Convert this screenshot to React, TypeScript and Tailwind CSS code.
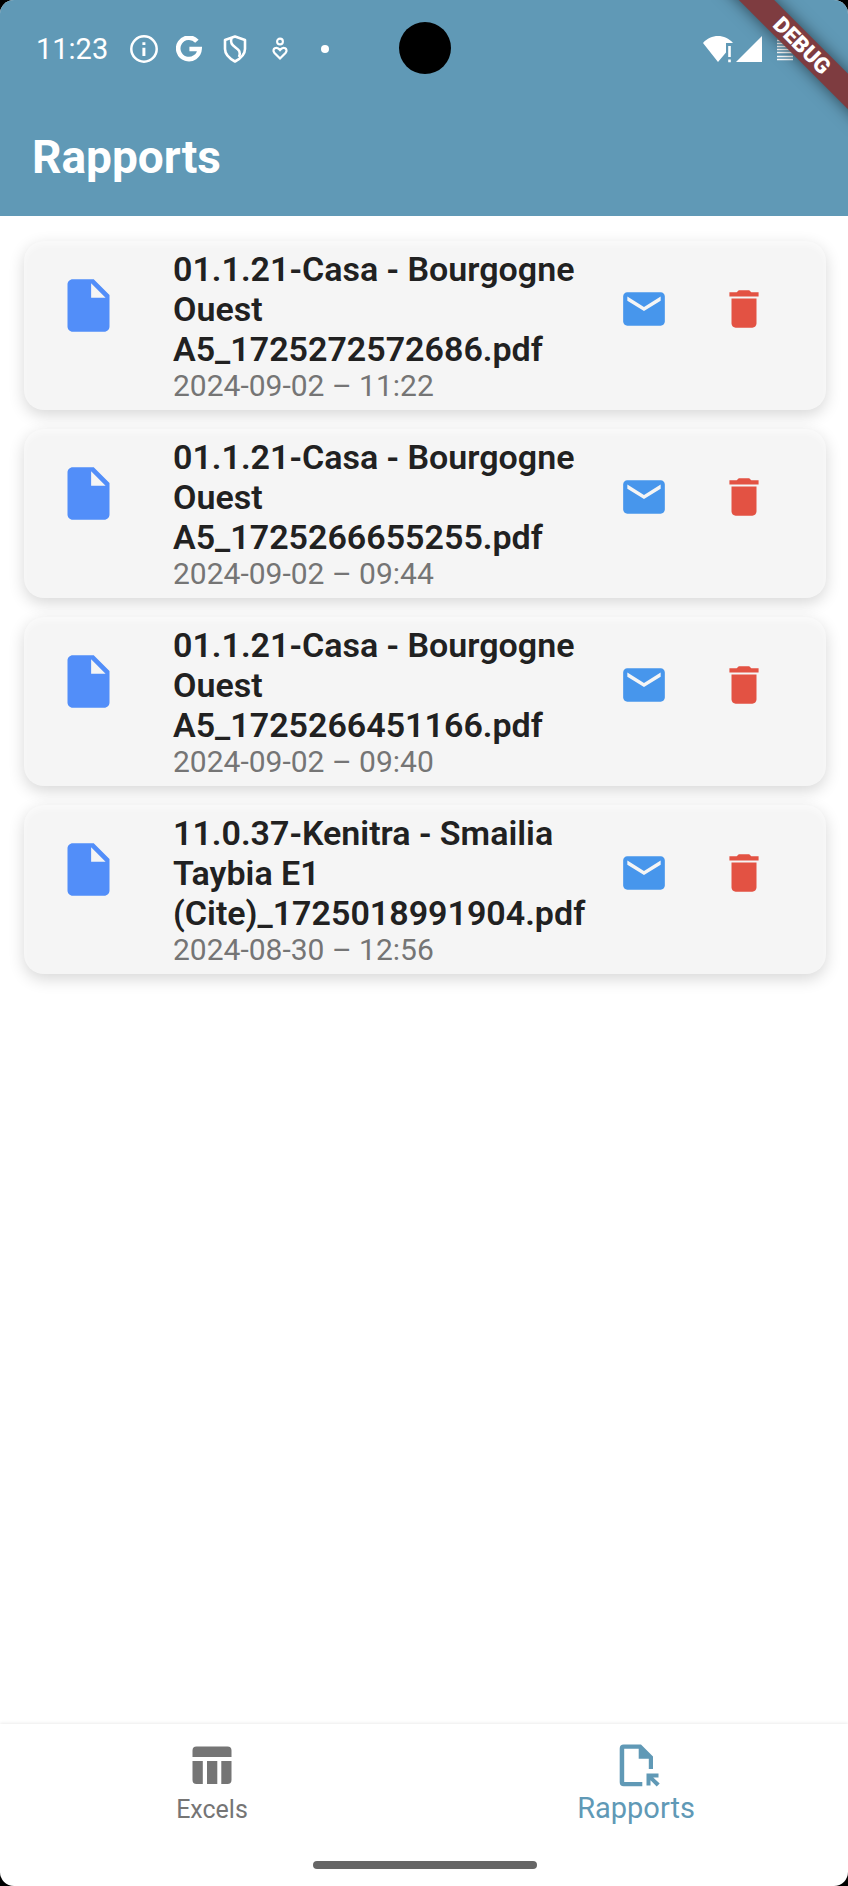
import React from "react";

type Report = { name: string; date: string };

const reports: Report[] = [
  { name: "01.1.21-Casa - Bourgogne Ouest A5_1725272572686.pdf", date: "2024-09-02 – 11:22" },
  { name: "01.1.21-Casa - Bourgogne Ouest A5_1725266655255.pdf", date: "2024-09-02 – 09:44" },
  { name: "01.1.21-Casa - Bourgogne Ouest A5_1725266451166.pdf", date: "2024-09-02 – 09:40" },
  { name: "11.0.37-Kenitra - Smailia Taybia E1 (Cite)_1725018991904.pdf", date: "2024-08-30 – 12:56" },
];

function StatusBar() {
  return (
    <div className="relative flex h-[98px] items-center justify-between pl-9 pr-[55px]">
      <div className="flex items-center">
        <span className="w-[94px] text-[29px] leading-8">11:23</span>
        <svg className="w-7" viewBox="0 0 28 28" fill="none" aria-hidden="true">
          <circle cx="14" cy="14" r="12.7" stroke="white" strokeWidth="2.5" />
          <path d="M12.400 12.700h3V21h-3zM12.400 7.200h3V10h-3z" fill="white" />
        </svg>
        <svg className="ml-[18px] w-[26px]" viewBox="0 0 26 26" fill="none" aria-hidden="true">
          <path d="M20.900 5.300A10.700 10.700 0 1 0 23.600 13H13.400" stroke="white" strokeWidth="4.600" />
        </svg>
        <svg className="ml-[21px] h-7 w-6" viewBox="0 0 24 28" fill="none" aria-hidden="true">
          <path d="M12 1.500 22 5v9c0 5.500-4.500 9.500-10 12.500C6.500 23.500 2 19.500 2 14V5z" stroke="white" strokeWidth="2.600" strokeLinejoin="round" />
          <path d="M8.500 3c-1.500 5 .5 7 4 9.500s5.500 4.500 3.500 9.500" stroke="white" strokeWidth="2.600" />
        </svg>
        <svg className="ml-[25px] h-6 w-4" viewBox="0 0 16 24" fill="none" aria-hidden="true">
          <circle cx="8" cy="4.500" r="2.900" stroke="white" strokeWidth="2.100" />
          <path d="M8 21.500 2.300 15.700C-.5 12 4.500 8.500 8 13c3.500-4.500 8.500-1 5.700 2.700z" stroke="white" strokeWidth="2.200" />
        </svg>
        <span className="ml-[33px] size-2 rounded-full bg-white" />
      </div>
      <div className="absolute inset-x-0 top-[22px] flex justify-center pl-0.5">
        <div className="size-[52px] rounded-full bg-black" />
      </div>
      <div className="flex items-center">
        <svg className="h-7 w-[30px]" viewBox="0 0 30 28" fill="white" aria-hidden="true">
          <path d="M0 8C8-1.200 22-1.200 30 8h-7v9.500L15 27z" />
          <path d="M25.200 11h2.600v11h-2.600zM25.200 24.500h2.600v2.800h-2.600z" />
        </svg>
        <svg className="ml-[3px] w-[26px]" viewBox="0 0 26 26" fill="white" aria-hidden="true">
          <path d="M26 0v26H0z" />
        </svg>
        <svg className="ml-[15px] h-6 w-4" viewBox="0 0 16 24" stroke="white" strokeWidth="1.300" aria-hidden="true">
          <path d="M0 .5h16M0 3.500h16M0 6.500h16M0 9.500h16M0 12.500h16M0 15.500h16M0 19.500h16M0 22.500h16" />
        </svg>
      </div>
    </div>
  );
}

function DebugBanner() {
  return (
    <div className="pointer-events-none absolute right-0 top-0 size-40 overflow-hidden">
      <div className="absolute left-[14px] top-[33px] flex h-[25px] w-[200px] rotate-45 items-center justify-center bg-[#7e3c40] text-[22px] font-black leading-6 text-white shadow-[0_0_16px_rgba(0,0,0,0.55)]">
        DEBUG
      </div>
    </div>
  );
}

function ReportCard({ report }: { report: Report }) {
  return (
    <li className="flex items-start rounded-[20px] bg-[#f5f5f5] py-2 pl-[33px] pr-8 shadow-[0_5px_16px_rgba(0,0,0,0.16),inset_0_4px_6px_rgba(255,255,255,0.5)]">
      <svg className="mt-[25px] size-[63px] shrink-0" viewBox="0 0 24 24" fill="#528ef9" aria-hidden="true">
        <path d="M6 2c-1.100 0-2 .9-2 2v16c0 1.100.9 2 2 2h12c1.100 0 2-.9 2-2V8l-6-6H6zm7 7V3.500L18.500 9H13z" />
      </svg>
      <div className="ml-[53px] min-w-0 flex-1">
        <h2 className="text-[34px] font-semibold leading-10 text-[#212121]">{report.name}</h2>
        <p className="text-[30px] leading-[33px] text-[#757575]">{report.date}</p>
      </div>
      <div className="mt-2.5 flex shrink-0">
        <button type="button" aria-label="Envoyer" className="flex size-[100px] items-center justify-center">
          <svg className="size-[50px]" viewBox="0 0 24 24" fill="#4796ec" aria-hidden="true">
            <path d="M20 4H4c-1.100 0-2 .9-2 2v12c0 1.100.9 2 2 2h16c1.100 0 2-.9 2-2V6c0-1.100-.9-2-2-2zm0 4-8 5-8-5V6l8 5 8-5v2z" />
          </svg>
        </button>
        <button type="button" aria-label="Supprimer" className="flex size-[100px] items-center justify-center">
          <svg className="size-[50px]" viewBox="0 0 24 24" fill="#e35243" aria-hidden="true">
            <path d="M6 19c0 1.100.9 2 2 2h8c1.100 0 2-.9 2-2V7H6v12zM19 4h-3.500l-1-1h-5l-1 1H5v2h14V4z" />
          </svg>
        </button>
      </div>
    </li>
  );
}

export default function App() {
  return (
    <div className="bg-black font-['Roboto',sans-serif]">
      <div className="relative flex min-h-screen flex-col overflow-hidden rounded-[14px] bg-white">
        <header className="bg-[#6099b6] text-white">
          <StatusBar />
          <h1 className="px-8 pb-8 pt-[33px] text-[46px] font-bold leading-[53px]">Rapports</h1>
        </header>
        <DebugBanner />
        <main className="flex-1 py-[25px] pl-6 pr-[22px]">
          <ul className="flex flex-col gap-[19px]">
            {reports.map((r) => (
              <ReportCard key={r.name} report={r} />
            ))}
          </ul>
        </main>
        <nav className="shadow-[0_-1px_3px_rgba(0,0,0,0.08)]">
          <div className="grid h-[117px] grid-cols-2">
            <a href="#excels" className="flex flex-col items-center pt-4 text-[#757575]">
              <svg className="size-[50px]" viewBox="0 0 50 50" fill="currentColor" aria-hidden="true">
                <path d="M9.500 6.500h31a4 4 0 0 1 4 4v6.500h-39v-6.500a4 4 0 0 1 4-4zM5.500 21h10.300v23H9.500a4 4 0 0 1-4-4zM20 21h10.300v23H20zM34.300 21h10.200v19a4 4 0 0 1-4 4h-6.200z" />
              </svg>
              <span className="mt-1 text-[25px] leading-8">Excels</span>
            </a>
            <a href="#rapports" aria-current="page" className="flex flex-col items-center pt-4 text-[#6099b6]">
              <svg className="size-[50px]" viewBox="0 0 50 50" fill="currentColor" aria-hidden="true">
                <path d="M12.700 4.500h17.300L42 16.500V29h-4.200V18.700H27.700V8.700H13.200v33.300h18.100v4.200H12.700a4 4 0 0 1-4-4V8.500a4 4 0 0 1 4-4z" />
                <path d="M35.500 33.500H47.500v4h-5.300l6.500 6-3 3-6.200-6.200v5.200h-4z" />
              </svg>
              <span className="mt-0.5 text-[29px] leading-8">Rapports</span>
            </a>
          </div>
          <div className="flex h-[45px] items-center justify-center pl-0.5 pt-[3px]">
            <div className="h-2 w-56 rounded-full bg-[#666666]" />
          </div>
        </nav>
      </div>
    </div>
  );
}
